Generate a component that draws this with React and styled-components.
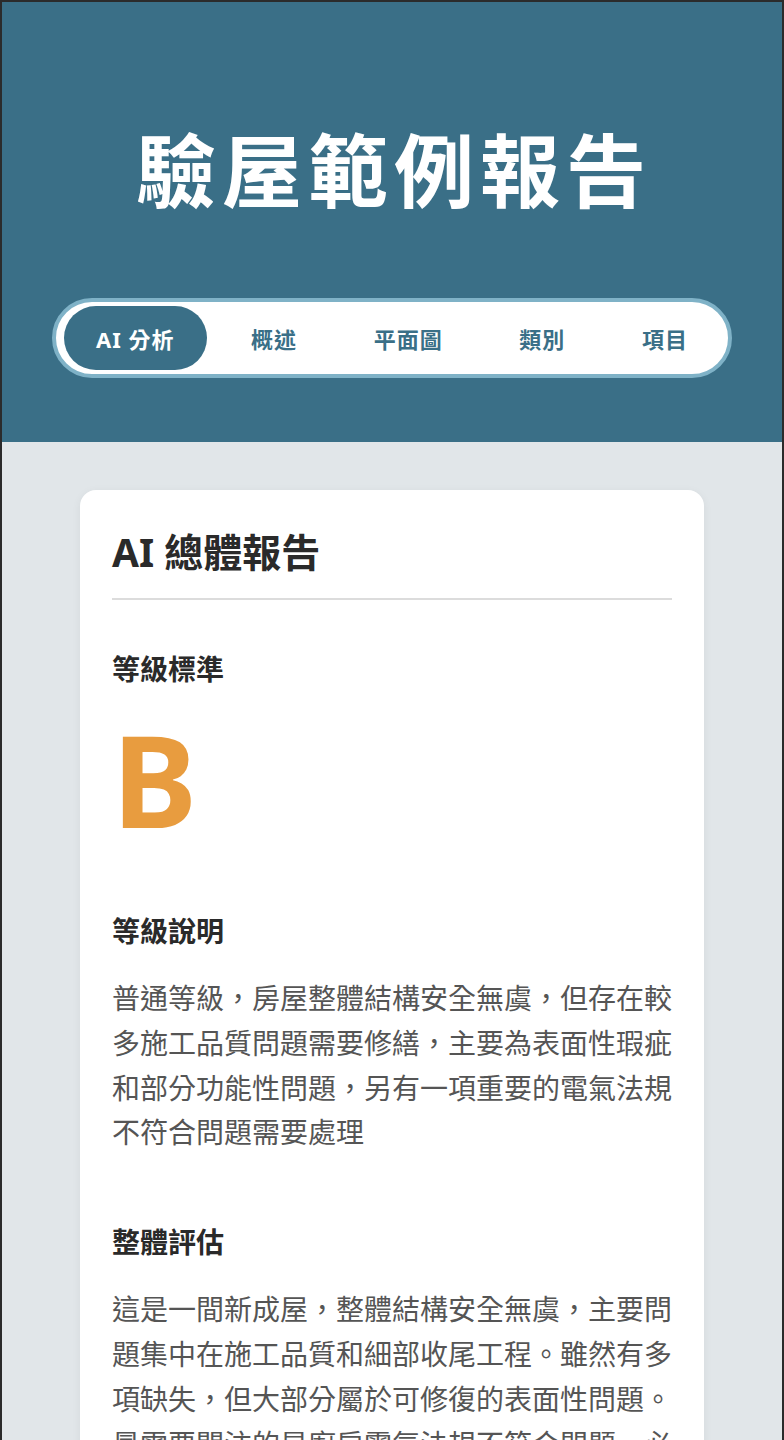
import React from "react";
import styled, { createGlobalStyle } from "styled-components";

const GlobalStyle = createGlobalStyle`
  *, *::before, *::after { box-sizing: border-box; }
  html, body { margin: 0; padding: 0; background: #e1e6e9; }
  body {
    font-family: "Noto Sans", "Noto Sans CJK TC", sans-serif;
    -webkit-font-smoothing: antialiased;
  }
`;

const Frame = styled.div`
  min-height: 1440px;
  border: 2px solid #2b2b2b;
  border-bottom: none;
  background: #e1e6e9;
`;

const Header = styled.header`
  background: #3a6f87;
  padding: 120px 0 64px;
  display: flex;
  flex-direction: column;
  align-items: center;
`;

const Title = styled.h1`
  margin: 0 0 80px;
  color: #ffffff;
  font-size: 80px;
  line-height: 96px;
  font-weight: 700;
  letter-spacing: 6px;
  text-indent: 4px;
`;

const TabBar = styled.nav`
  width: 680px;
  display: flex;
  justify-content: space-between;
  align-items: center;
  background: #ffffff;
  border: 4px solid #7fb2c7;
  border-radius: 999px;
  padding: 4px 8px;
`;

const Tab = styled.button`
  height: 64px;
  padding: 0 32px;
  border: none;
  border-radius: 999px;
  background: ${(p) => (p.$active ? "#3a6f87" : "transparent")};
  color: ${(p) => (p.$active ? "#ffffff" : "#3a6f87")};
  font-family: "Noto Sans", "Noto Sans CJK TC", sans-serif;
  font-size: 22px;
  font-weight: 700;
  letter-spacing: 1px;
  white-space: nowrap;
  display: flex;
  align-items: center;
  cursor: pointer;
`;

const Main = styled.main`
  padding: 48px 0;
  display: flex;
  justify-content: center;
`;

const Card = styled.section`
  width: 80%;
  background: #ffffff;
  border-radius: 16px;
  box-shadow: 0 2px 10px rgba(0, 0, 0, 0.06);
  padding: 32px;
`;

const CardTitle = styled.h2`
  margin: 0 0 48px;
  padding-bottom: 16px;
  border-bottom: 2px solid #dcdcdc;
  color: #2a2a2a;
  font-size: 39px;
  line-height: 60px;
  font-weight: 700;
`;

const Section = styled.div`
  margin-bottom: 66px;
`;

const Heading = styled.h3`
  margin: 0 0 24px;
  color: #2a2a2a;
  font-size: 28px;
  line-height: 42px;
  font-weight: 700;
`;

const Grade = styled.div`
  color: #e89c3f;
  font-family: "Noto Sans", sans-serif;
  font-size: 128px;
  line-height: 130px;
  font-weight: 700;
`;

const Body = styled.p`
  margin: 0;
  color: #555555;
  font-size: 28px;
  line-height: 1.6;
  font-weight: 400;
`;

const tabs = ["AI 分析", "概述", "平面圖", "類別", "項目"];

export default function App() {
  return (
    <>
      <GlobalStyle />
      <Frame>
        <Header>
          <Title>驗屋範例報告</Title>
          <TabBar>
            {tabs.map((t, i) => (
              <Tab key={t} $active={i === 0}>
                {t}
              </Tab>
            ))}
          </TabBar>
        </Header>
        <Main>
          <Card>
            <CardTitle>AI 總體報告</CardTitle>
            <Section>
              <Heading>等級標準</Heading>
              <Grade>B</Grade>
            </Section>
            <Section>
              <Heading>等級說明</Heading>
              <Body>
                普通等級，房屋整體結構安全無虞，但存在較多施工品質問題需要修繕，主要為表面性瑕疵和部分功能性問題，另有一項重要的電氣法規不符合問題需要處理
              </Body>
            </Section>
            <Section>
              <Heading>整體評估</Heading>
              <Body>
                這是一間新成屋，整體結構安全無虞，主要問題集中在施工品質和細部收尾工程。雖然有多項缺失，但大部分屬於可修復的表面性問題。最需要關注的是廚房電氣法規不符合問題，必須儘速改善以確保使用安全。
              </Body>
            </Section>
          </Card>
        </Main>
      </Frame>
    </>
  );
}
